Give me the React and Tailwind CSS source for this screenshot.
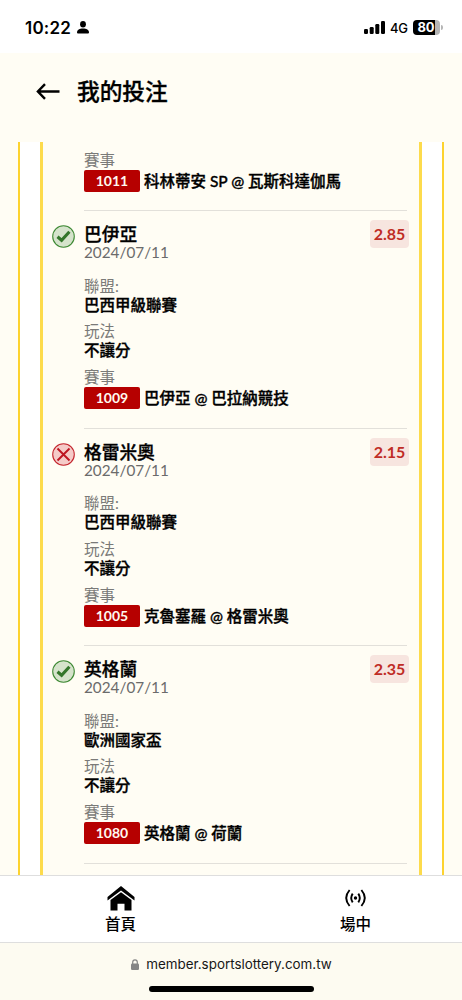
const bets = [
  {
    id: "1009",
    team: "巴伊亞",
    date: "2024/07/11",
    league: "巴西甲級聯賽",
    play: "不讓分",
    match: "巴伊亞 @ 巴拉納競技",
    odds: "2.85",
    won: true,
  },
  {
    id: "1005",
    team: "格雷米奧",
    date: "2024/07/11",
    league: "巴西甲級聯賽",
    play: "不讓分",
    match: "克魯塞羅 @ 格雷米奧",
    odds: "2.15",
    won: false,
  },
  {
    id: "1080",
    team: "英格蘭",
    date: "2024/07/11",
    league: "歐洲國家盃",
    play: "不讓分",
    match: "英格蘭 @ 荷蘭",
    odds: "2.35",
    won: true,
  },
];

const StatusBar = () => (
  <div className="flex h-[53px] shrink-0 items-center bg-white pl-[25px] pr-[19px] pt-[2px] font-['Inter',sans-serif] text-black">
    <span className="text-[17px] font-semibold leading-5 tracking-[0.2px]">10:22</span>
    <svg className="ml-[6px]" width="12" height="13" viewBox="0 0 12 13">
      <ellipse cx="6" cy="3.2" rx="2.9" ry="3.2" />
      <path d="M0 11.3C0 8.9 2.6 7.4 6 7.4s6 1.5 6 3.9c0 .8-.5 1.2-1.3 1.2H1.3C.5 12.5 0 12.1 0 11.3Z" />
    </svg>
    <svg className="ml-auto" width="21" height="13" viewBox="0 0 21 13">
      <rect x="0" y="8" width="4" height="5" rx="1.2" />
      <rect x="5.7" y="6" width="4" height="7" rx="1.2" />
      <rect x="11.3" y="3" width="4" height="10" rx="1.2" />
      <rect x="17" y="0" width="4" height="13" rx="1.2" />
    </svg>
    <span className="ml-[5px] w-[19px] text-[13px] font-medium leading-4 tracking-[-0.2px]">4G</span>
    <div className="ml-[4px] flex h-[15px] w-[27px] items-center justify-center rounded-[4px] bg-[linear-gradient(90deg,#000_82%,#b5b5b5_82%)] pr-[1px] text-[13px] font-bold leading-none text-white">
      80
    </div>
    <div className="ml-[1px] h-[5px] w-[2px] rounded-r-full bg-[#b5b5b5]" />
  </div>
);

const ResultIcon = ({ won }) => (
  <svg className="mt-[14px] shrink-0" width="23" height="23" viewBox="0 0 23 23" fill="none">
    <circle
      cx="11.5"
      cy="11.5"
      r="10.8"
      fill={won ? "#d5e3cb" : "#f5cbc8"}
      stroke={won ? "#3f8a35" : "#c4262e"}
      strokeWidth="1.1"
    />
    {won ? (
      <path d="M5.5 11.8 9.6 15.3 17.4 6.8" stroke="#33762a" strokeWidth="3.1" />
    ) : (
      <path d="m5.5 5.5 12 12m0-12-12 12" stroke="#be1622" strokeWidth="1.9" />
    )}
  </svg>
);

const Field = ({ label, value }) => (
  <div className="mb-[7.8px]">
    <div className="h-[19px] leading-[19px] text-[#7a7a78]">{label}</div>
    <div className="h-[19px] font-medium leading-[19px] [-webkit-text-stroke:0.35px_#000]">{value}</div>
  </div>
);

const Match = ({ id, match }) => (
  <>
    <div className="h-[19px] leading-[19px] text-[#7a7a78]">賽事</div>
    <div className="flex items-center whitespace-nowrap">
      <span className="h-[22px] w-[56px] rounded-[2px] bg-[#b60000] text-center text-[14px] font-bold leading-[22px] text-[#fff8f0]">
        {id}
      </span>
      <span className="ml-[4px] font-medium leading-[22px] [-webkit-text-stroke:0.35px_#000]">{match}</span>
    </div>
  </>
);

const Bet = ({ bet }) => (
  <div className="flex h-[217.5px] shrink-0 pl-[9px]">
    <ResultIcon won={bet.won} />
    <div className="ml-[9px] w-[323px] border-b border-[#e2e0da] pt-[14px]">
      <div className="flex h-[51.5px] justify-between">
        <div>
          <div className="pt-px text-[17.7px] font-medium leading-[18px] [-webkit-text-stroke:0.35px_#000]">
            {bet.team}
          </div>
          <div className="-mt-px text-[15.3px] leading-[18px] text-[#6b6b6b]">{bet.date}</div>
        </div>
        <span className="-mr-[2px] -mt-[5px] h-[28px] w-[39px] rounded-[4px] bg-[#f7e5df] text-center text-[16px] font-bold leading-[28px] text-[#bf2c25]">
          {bet.odds}
        </span>
      </div>
      <Field label="聯盟:" value={bet.league} />
      <Field label="玩法" value={bet.play} />
      <Match id={bet.id} match={bet.match} />
    </div>
  </div>
);

const HomeIcon = () => (
  <svg width="28" height="25" viewBox="0 0 28 25">
    <path d="M14 0 .5 11v3.4L14 4.400l13.500 10V11Z" />
    <path d="M14 6.200 3.500 14.100V24.500h7v-6.800h7v6.800h7V14.100Z" />
  </svg>
);

const LiveIcon = () => (
  <svg width="21" height="18" viewBox="0 0 21 18" fill="none" stroke="#000" strokeWidth="1.9">
    <circle cx="10.5" cy="9" r="1.7" fill="#000" stroke="none" />
    <path d="M7.700 4.600Q4.700 9 7.700 13.400M13.300 4.600Q16.300 9 13.300 13.400" />
    <path d="M4.600 1Q-2.200 9 4.600 17M16.400 1Q23.200 9 16.400 17" />
  </svg>
);

const BottomNav = () => (
  <nav className="flex h-[68px] shrink-0 border-y border-[#dedede] bg-white text-[15.5px] font-medium leading-[19px]">
    <div className="flex w-[241px] shrink-0 flex-col items-center pt-[10px]">
      <HomeIcon />
      <span className="mt-[4px]">首頁</span>
    </div>
    <div className="flex w-[229px] shrink-0 flex-col items-center pt-[13px]">
      <LiveIcon />
      <span className="mt-[8px]">場中</span>
    </div>
  </nav>
);

const AddressBar = () => (
  <div className="flex h-[57px] shrink-0 flex-col items-center bg-[#fdfbf1]">
    <div className="flex h-[43px] items-center pl-px font-['Inter',sans-serif] text-[13.4px] text-[#171717]">
      <svg className="mr-[7px]" width="8" height="11" viewBox="0 0 8 11" fill="#858585">
        <rect y="4.5" width="8" height="6.5" rx="1.2" />
        <path d="M1.7 5V3.2a2.3 2.3 0 0 1 4.6 0V5" fill="none" stroke="#858585" strokeWidth="1.2" />
      </svg>
      member.sportslottery.com.tw
    </div>
    <div className="h-[6px] w-[165px] rounded-full bg-black" />
  </div>
);

export default function App() {
  return (
    <div className="flex h-[1000px] w-[462px] flex-col overflow-hidden bg-[#fffdf4] font-['Lato','Noto_Sans_CJK_TC',sans-serif] text-black">
      <StatusBar />
      <header className="flex h-[88px] shrink-0 items-start pl-[36px] pt-[23px]">
        <svg className="mt-[7px]" width="24" height="17" viewBox="0 0 24 17" fill="none" stroke="#000" strokeWidth="2.4">
          <path d="M23.5 8.5H2M9 1.2 1.9 8.5 9 15.8" />
        </svg>
        <h1 className="ml-[17px] text-[22.7px] font-medium leading-[31px] [-webkit-text-stroke:0.3px_#000]">我的投注</h1>
      </header>
      <main className="min-h-0 flex-1 overflow-hidden px-[18px] pt-px">
        <div className="h-full border-x-2 border-[#fdd32f] bg-white px-[20px]">
          <div className="flex h-full flex-col overflow-hidden border-x-3 border-[#fddb4c] bg-[#fffdf4] text-[15.5px]">
            <div className="ml-[41px] h-[69px] w-[323px] shrink-0 border-b border-[#e2e0da] pt-[9px]">
              <Match id="1011" match="科林蒂安 SP @ 瓦斯科達伽馬" />
            </div>
            {bets.map((bet) => (
              <Bet key={bet.id} bet={bet} />
            ))}
          </div>
        </div>
      </main>
      <BottomNav />
      <AddressBar />
    </div>
  );
}
